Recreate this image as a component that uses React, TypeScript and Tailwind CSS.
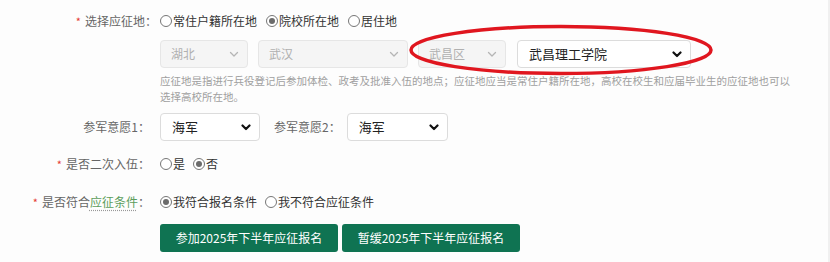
const font = { fontFamily: '"Noto Sans CJK SC", "Noto Sans", sans-serif' }

function Radio({ checked, label }: { checked?: boolean; label: string }) {
  return (
    <label className="flex items-center text-[12px] text-[#333]">
      <span className="mr-[1px] flex h-[12px] w-[12px] items-center justify-center rounded-full border border-[#767676] bg-white">
        {checked && <span className="h-[6px] w-[6px] rounded-full bg-[#6b6b6b]" />}
      </span>
      {label}
    </label>
  )
}

function Chevron({ dim }: { dim?: boolean }) {
  return (
    <svg width="10" height="7" viewBox="0 0 10 7" className="shrink-0">
      <path
        d="M1.5 1.5 L5 5 L8.5 1.5"
        fill="none"
        stroke={dim ? "#b5b5b5" : "#111"}
        strokeWidth={dim ? 1.3 : 2.2}
        strokeLinecap="round"
        strokeLinejoin="round"
      />
    </svg>
  )
}

function Select({ value, width, disabled }: { value: string; width: string; disabled?: boolean }) {
  return (
    <div
      className={
        disabled
          ? `flex h-[28px] ${width} items-center justify-between rounded-[4px] border border-[#e6e6e6] bg-[#f5f5f5] pl-[10px] pr-[8px] text-[12px] text-[#b0b0b0]`
          : `flex h-[28px] ${width} items-center justify-between rounded-[4px] border border-[#dcdcdc] bg-white pl-[11px] pr-[8px] text-[13px] text-[#222]`
      }
    >
      <span>{value}</span>
      <Chevron dim={disabled} />
    </div>
  )
}

function Label({ text, star, className = "w-[150px]" }: { text: React.ReactNode; star?: boolean; className?: string }) {
  return (
    <div className={`flex ${className} shrink-0 items-center justify-end text-[12px] text-[#666]`}>
      {star && <span className="mr-[4px] text-[11px] text-[#e53935]">*</span>}
      <span>{text}：</span>
    </div>
  )
}

export default function App() {
  return (
    <main className="relative h-[262px] w-[830px] overflow-hidden bg-[#fdfdfd]" style={font}>
      <div className="absolute right-0 top-0 h-full w-[2px] bg-[#f0f0f0]" />

      <div className="flex flex-col pt-[11px]">
        {/* 应征地 */}
        <div className="flex h-[20px] items-center">
          <Label text="选择应征地" star className="w-[157px]" />
          <div className="ml-[3px] flex items-center gap-[9px]">
            <Radio label="常住户籍所在地" />
            <Radio checked label="院校所在地" />
            <Radio label="居住地" />
          </div>
        </div>

        <div className="relative ml-[160px] mt-[9px] flex items-center gap-[10px]">
          <Select value="湖北" width="w-[88px]" disabled />
          <Select value="武汉" width="w-[150px]" disabled />
          <Select value="武昌区" width="w-[88px]" disabled />
          <div className="ml-[1px]">
            <Select value="武昌理工学院" width="w-[174px]" />
          </div>
          <svg className="pointer-events-none absolute left-[248px] top-[-16px]" width="306" height="54" viewBox="0 0 306 54">
            <ellipse cx="153" cy="26" rx="150" ry="23.5" fill="none" stroke="#e0161f" strokeWidth="3.5" />
          </svg>
        </div>

        <p className="ml-[160px] mt-[5px] w-[636px] text-[10.5px] leading-[16px] text-[#a0a0a0]">
          应征地是指进行兵役登记后参加体检、政考及批准入伍的地点；应征地应当是常住户籍所在地，高校在校生和应届毕业生的应征地也可以选择高校所在地。
        </p>

        {/* 参军意愿 */}
        <div className="mt-[8px] flex items-center">
          <Label text="参军意愿1" />
          <div className="ml-[10px] flex items-center">
            <Select value="海军" width="w-[100px]" />
            <div className="ml-[14px] text-[12px] text-[#666]">参军意愿2：</div>
            <div className="ml-[6px]">
              <Select value="海军" width="w-[101px]" />
            </div>
          </div>
        </div>

        <div className="mt-[13px] flex h-[20px] items-center">
          <Label text="是否二次入伍" star />
          <div className="ml-[10px] flex items-center gap-[8px]">
            <Radio label="是" />
            <Radio checked label="否" />
          </div>
        </div>

        <div className="mt-[18px] flex h-[20px] items-center">
          <Label
            text={
              <>
                是否符合
                <span className="text-[#5c9e5c] underline decoration-dotted decoration-[#999] underline-offset-[3px]">应征条件</span>
              </>
            }
            star
          />
          <div className="ml-[10px] flex items-center gap-[8px]">
            <Radio checked label="我符合报名条件" />
            <Radio label="我不符合应征条件" />
          </div>
        </div>

        <div className="ml-[160px] mt-[12px] flex gap-[4px]">
          <button className="h-[28px] w-[178px] rounded-[3px] bg-[#0f7352] text-[12px] text-white">
            参加2025年下半年应征报名
          </button>
          <button className="h-[28px] w-[178px] rounded-[3px] bg-[#0f7352] text-[12px] text-white">
            暂缓2025年下半年应征报名
          </button>
        </div>
      </div>
    </main>
  )
}
